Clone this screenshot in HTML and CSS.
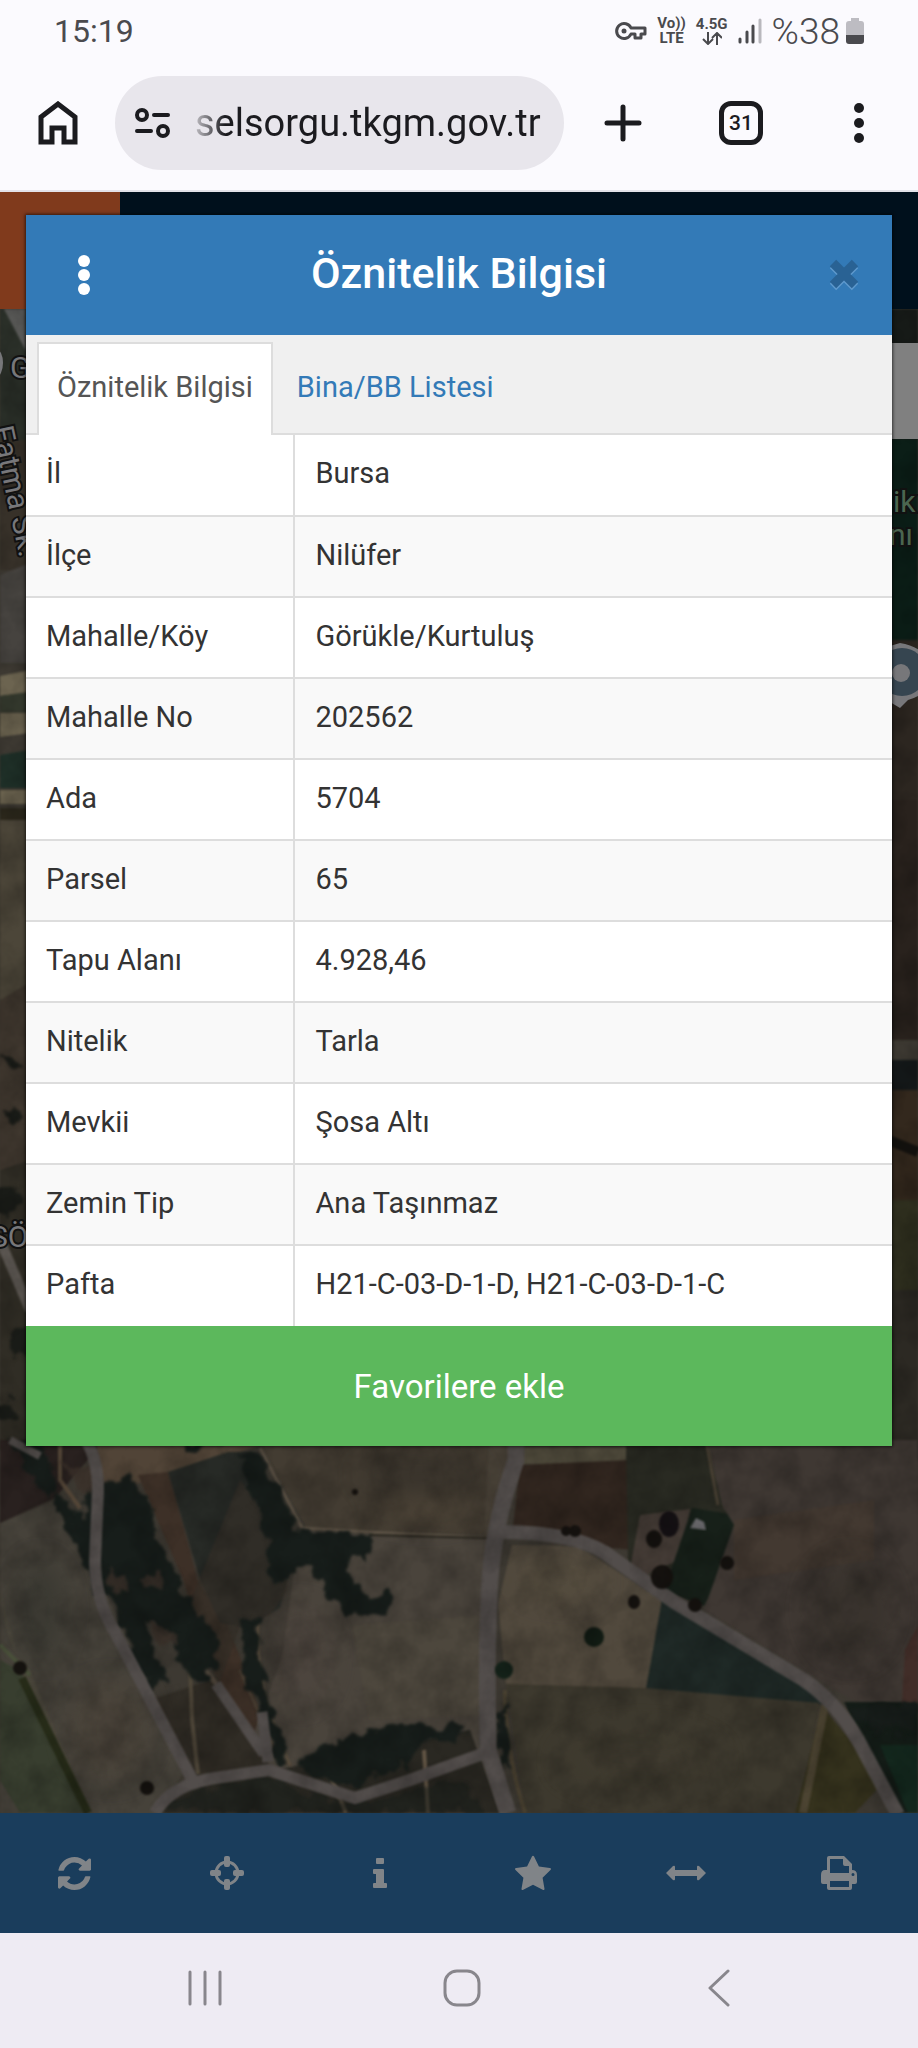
FILE: index.html
```html
<!DOCTYPE html>
<html lang="tr">
  <head>
    <meta charset="UTF-8" />
    <meta name="viewport" content="width=device-width, initial-scale=1.0" />
    <title>Parsel Sorgu</title>
    <link rel="stylesheet" href="styles.css">
  </head>
  <body>
    <div class="status-bar">
      <span class="clock">15:19</span>
      <div class="status-icons">
        <svg class="key-icon" width="32" height="20" viewBox="0 0 32 20" fill="none" stroke="#4a4a4e" stroke-width="3">
          <path d="M16 7a7.500 7.500 0 1 0 0 6h4v4h6v-4h4V7z" stroke-linejoin="round" />
          <circle cx="9" cy="10" r="2.500" fill="#4a4a4e" stroke="none" />
        </svg>
        <span class="network">Vo))<br>LTE</span>
        <span class="network">4.5G
          <svg width="20" height="13" viewBox="0 0 20 13" fill="none" stroke="#4a4a4e" stroke-width="2">
            <path d="M6 0v11M1 7l5 5 5-5M15 13V2M10 6l5-5 5 5" />
          </svg>
        </span>
        <svg width="24" height="26" viewBox="0 0 24 26" stroke-width="3" stroke-linecap="round" stroke="#4a4a4e">
          <path d="M2 21v3M9 14v10M15 8v16" />
          <path d="M22 2v22" stroke="#b9b8bd" />
        </svg>
        <span class="battery-text">%38</span>
        <svg width="18" height="26" viewBox="0 0 18 26">
          <path d="M5 0h8v3h2q3 0 3 3v12H0V6q0-3 3-3h2z" fill="#bdbcc2" />
          <path d="M0 17h18v6q0 3-3 3H3q-3 0-3-3z" fill="#4a4a4e" />
        </svg>
      </div>
    </div>

    <header class="browser-bar">
      <button class="bar-button home" aria-label="Ana sayfa">
        <svg width="40" height="44" viewBox="0 0 40 44" fill="none" stroke="#1b1b1f" stroke-width="5">
          <path d="M3 41V16L20 3l17 13v25H26V27H14v14z" />
        </svg>
      </button>
      <div class="address">
        <svg width="36" height="32" viewBox="0 0 36 32" fill="none" stroke="#1b1b1f" stroke-width="4" stroke-linecap="round">
          <circle cx="7" cy="8" r="5" />
          <path d="M19 8h14M2 24h14" />
          <circle cx="28" cy="24" r="5" />
        </svg>
        <input class="url" type="text" value="selsorgu.tkgm.gov.tr" aria-label="Adres">
      </div>
      <button class="bar-button" aria-label="Yeni sekme">
        <svg width="38" height="38" viewBox="0 0 38 38" stroke="#1b1b1f" stroke-width="5" stroke-linecap="round">
          <path d="M19 3v32M3 19h32" />
        </svg>
      </button>
      <button class="bar-button" aria-label="Sekmeler"><span class="tab-count">31</span></button>
      <button class="bar-button" aria-label="Menü">
        <svg width="10" height="40" viewBox="0 0 10 40" fill="#1b1b1f">
          <circle cx="5" cy="5" r="5" />
          <circle cx="5" cy="20" r="5" />
          <circle cx="5" cy="35" r="5" />
        </svg>
      </button>
    </header>

    <main class="page">
      <div class="backdrop">
        <div class="site-header"><div class="site-logo"></div></div>
        <svg class="map" viewBox="0 309 918 1504" preserveAspectRatio="xMidYMin slice">
          <defs>
            <filter id="rough" x="-5%" y="-5%" width="110%" height="110%" color-interpolation-filters="sRGB">
              <feTurbulence type="fractalNoise" baseFrequency="0.06" numOctaves="3" seed="4" />
              <feDisplacementMap in="SourceGraphic" scale="22" xChannelSelector="R" yChannelSelector="G" />
              <feGaussianBlur stdDeviation="1.500" />
            </filter>
            <filter id="soft" x="-5%" y="-5%" width="110%" height="110%" color-interpolation-filters="sRGB">
              <feGaussianBlur stdDeviation="1" />
            </filter>
            <filter id="haze" x="-20%" y="-20%" width="140%" height="140%" color-interpolation-filters="sRGB">
              <feGaussianBlur stdDeviation="12" />
            </filter>
            <filter id="grain">
              <feTurbulence type="fractalNoise" baseFrequency="0.03" numOctaves="4" seed="9" />
              <feColorMatrix values="0 0 0 0 0  0 0 0 0 0  0 0 0 0 0  1.200 0 0 0 -0.400" />
            </filter>
          </defs>
          <rect y="309" width="918" height="1504" fill="#3d3932" />

          <!-- left edge -->
          <g filter="url(#soft)">
            <path d="M0 309h30v150H0z" fill="#2b3029" />
            <path d="M4 309l22 42v-42z" fill="#5a5a58" />
            <path d="M0 440h30v130H0z" fill="#373129" />
            <path d="M0 575l30-12v100H0z" fill="#46433f" />
            <path d="M0 676l30-6v22l-30 4zM0 713h30v20l-30 4zM0 790h30v14H0z" fill="#6c6450" />
            <path d="M0 755l30-5v38H0z" fill="#1f3028" />
            <path d="M0 696l30-4v20H0z" fill="#353a2e" />
            <path d="M0 808h30v12H0z" fill="#2c281c" />
            <path d="M0 820h30v190H0z" fill="#4c4639" />
            <path d="M0 1000l30-18v190H0z" fill="#40382f" />
            <path d="M0 1170l30-10v290H0z" fill="#302d25" />
            <path d="M0 1240l30 70" stroke="#5a5550" stroke-width="10" />
          </g>
          <g filter="url(#rough)" fill="#191b17">
            <circle cx="14" cy="1064" r="8" /><circle cx="14" cy="1116" r="9" /><circle cx="6" cy="1200" r="14" />
            <circle cx="20" cy="1340" r="14" /><circle cx="6" cy="1410" r="12" />
          </g>

          <!-- right edge -->
          <g filter="url(#soft)">
            <path d="M888 309h30v500h-30z" fill="#171b18" />
            <path d="M888 439h30v208h-30z" fill="#0b1e17" />
            <path d="M888 640h30v170h-30z" fill="#2c2620" />
            <path d="M888 800h30v240h-30z" fill="#29221d" />
            <path d="M888 1060h30v30h-30z" fill="#15191a" />
            <path d="M888 1090h30v110h-30z" fill="#33281d" />
            <path d="M888 1140l30 12" stroke="#14120f" stroke-width="10" />
            <path d="M888 1200h30v90h-30z" fill="#30301f" />
            <path d="M888 1290h30v170h-30z" fill="#2c2923" />
          </g>

          <!-- fields -->
          <g filter="url(#soft)">
            <path d="M0 1440h60l45 0-50 58-55 25z" fill="#29211f" />
            <path d="M0 1523l55-22 42 75 20 40 70 150-30 50H0z" fill="#46423a" />
            <path d="M0 1590q5 60 30 80l60 143H60z" fill="#4b473c" />
            <path d="M0 1660l20 10 65 143H20L0 1780z" fill="#383e2f" />
            <path d="M95 1440h180l-95 32-75 20z" fill="#514437" />
            <path d="M138 1475l30-3q20 70 30 110l28 40 20 50 20 60-10 20-52-100-20-70z" fill="#3d3027" />
            <path d="M168 1472l60-20 30 0 14 68 18 50-10 38-34 20-26-5-20-44z" fill="#272a26" />
            <path d="M240 1480l40 50 8 60-18 25-30 12-22 60-30-80z" fill="#352f28" opacity=".7" />
            <path d="M258 1440h230v95l-180-5-40-70z" fill="#433c32" />
            <path d="M300 1530l190 8-10 190-8 150-180 30-40-170 30-80z" fill="#4a443c" />
            <path d="M352 1625l137-10v100l-120 5z" fill="#4d473d" />
            <path d="M150 1700l66-22 54 88-76 12z" fill="#302c25" />
            <path d="M180 1790l290-60 30 83H160z" fill="#2a2822" />
            <path d="M489 1440h35l-30 97h-10z" fill="#484137" />
            <path d="M524 1447h102v16l-105 1z" fill="#504b3c" />
            <path d="M520 1465l110-5 5 90-60-5-62-18z" fill="#31261f" />
            <path d="M626 1445h80l18 65 18 2-14 92-45-26-55-15z" fill="#292a22" />
            <path d="M640 1515l50-6-8 50-38 16-14-6z" fill="#463d37" />
            <path d="M692 1508l50 8-12 40-26 50-40-15z" fill="#172019" />
            <path d="M708 1440h210v265H860L704 1610l30-85-12-20z" fill="#3f3833" />
            <path d="M734 1520l140-20v60l-140 20z" fill="#433931" />
            <path d="M512 1545l66 1 84 54-16 90-140-6-8-80z" fill="#51493d" />
            <path d="M662 1600l16 0 150 100-8 5-174-16z" fill="#1f2926" />
            <path d="M506 1684l140 4 174 15-20 110H525z" fill="#3d392e" />
            <path d="M823 1708l-28 105 60 0 30-32z" fill="#35321d" />
            <path d="M844 1702h74v111h-20z" fill="#141c17" />
            <path d="M880 1745h38v68h-10z" fill="#13271d" />
            <path d="M905 1650l13-25v78h-16z" fill="#412d28" />
          </g>
          <g filter="url(#haze)" opacity=".5">
            <ellipse cx="40" cy="1610" rx="24" ry="50" fill="#2f302a" />
            <ellipse cx="110" cy="1730" rx="40" ry="50" fill="#4e453a" />
            <ellipse cx="420" cy="1475" rx="60" ry="18" fill="#2e2a24" />
            <ellipse cx="425" cy="1510" rx="50" ry="12" fill="#54493a" />
            <ellipse cx="560" cy="1580" rx="40" ry="20" fill="#574f3f" />
            <ellipse cx="300" cy="1655" rx="30" ry="50" fill="#504741" />
            <ellipse cx="850" cy="1610" rx="40" ry="50" fill="#332e28" />
            <ellipse cx="640" cy="1760" rx="80" ry="30" fill="#413c30" />
          </g>

          <!-- field edges and small paths -->
          <g fill="none" filter="url(#soft)">
            <path d="M260 1448l42 80 66 4 125 6" stroke="#5d5346" stroke-width="3" />
            <path d="M370 1535l120 3" stroke="#26241d" stroke-width="2" />
            <path d="M190 1660l2 60 6 54" stroke="#50483a" stroke-width="4" />
            <path d="M150 1612l35 35 34 40" stroke="#554b40" stroke-width="5" />
            <path d="M240 1670l40 90 12 5" stroke="#4b4034" stroke-width="3" />
            <path d="M258 1620q-4 70 32 145" stroke="#574c3d" stroke-width="3" />
            <path d="M0 1645l30 30" stroke="#48503a" stroke-width="4" />
            <path d="M60 1440v40l20 28" stroke="#57493a" stroke-width="4" />
            <path d="M332 1780l14 33M424 1750l4 63" stroke="#625545" stroke-width="4" />
            <path d="M825 1705l-22 108" stroke="#4c4432" stroke-width="8" />
            <path d="M505 1690q0 60 20 123" stroke="#4d4433" stroke-width="4" />
            <path d="M706 1440l12 65" stroke="#4a4134" stroke-width="3" />
          </g>

          <!-- trees -->
          <g filter="url(#rough)" fill="#171d1a">
            <path d="M8 1440h30l24 55-14 4zM60 1496l34 30-2 60-14-30-20-46z" />
            <path d="M110 1485l20-8 15 15 20 60 30 60 20 20 4 40-22 10-20-22-20-38-30 0-36-42-8-90z" />
            <path d="M114 1610l30 10 24 60-14 14-14-24z" />
            <path d="M240 1455l22 2 38 75 62 0 10 14-4 16-20-2-2 10 24 26 18-4 6 12-12 12-40-2-30-46-20 0-18 22-10-50z" />
            <path d="M242 1620l18-4-4 40 16 50 20 58-12 2-36-90z" />
            <path d="M298 1765l30-24 32-6 44-12 24 0 40 8-14 10-30 4-20 20-50 20-14 0z" />
            <path d="M170 1800l70-20 30-4 60 26 60-4 70-20 30 35H175z" opacity=".5" />
            <path d="M502 1700l8 40 2 30-10-6-6-50z" />
            <path d="M844 1704h70v30l-42-4z" />
            <path d="M240 1440l-14 6-40 6 4-12z" />
          </g>
          <!-- clearings between the trees -->
          <g filter="url(#rough)" fill="#3a3029" opacity=".8">
            <path d="M108 1570l14 4 6 22-16-4z" />
            <path d="M142 1572l16 0 2 14-14 4z" />
            <path d="M150 1620l20 12 4 12-18-4z" />
            <path d="M60 1462l30 10 2 24-16-8z" />
          </g>

          <!-- roads -->
          <g fill="none" stroke="#524d4b" filter="url(#soft)">
            <path d="M10 1440l30 16" stroke-width="8" />
            <path d="M86 1440q12 20 12 50l-3 70q0 40 20 72l44 84 34 65" stroke-width="12" />
            <path d="M155 1813q14-26 54-34l60-9 24 8 62 20 55-18 78-28" stroke-width="12" />
            <path d="M216 1684l48 70M262 1712l6 50" stroke-width="11" />
            <path d="M516 1440v20q-22 62-26 120t-2 170l20 63" stroke-width="17" />
            <path d="M500 1532q70 0 104 20l70 50 130 78q34 24 54 60l40 75" stroke-width="14" />
          </g>

          <g filter="url(#soft)" fill="#15120f">
            <circle cx="20" cy="1668" r="7" /><circle cx="147" cy="1788" r="7" /><circle cx="355" cy="1492" r="3" />
            <ellipse cx="669" cy="1524" rx="10" ry="13" fill="#151114" /><ellipse cx="654" cy="1539" rx="8" ry="9" />
            <ellipse cx="662" cy="1577" rx="11" ry="12" /><ellipse cx="634" cy="1602" rx="6" ry="7" />
            <circle cx="727" cy="1563" r="7" /><circle cx="695" cy="1605" r="7" />
            <circle cx="594" cy="1637" r="10" fill="#121c14" /><circle cx="504" cy="1670" r="9" fill="#15231a" />
            <circle cx="566" cy="1531" r="5" /><circle cx="575" cy="1531" r="6" />
            <path d="M22 1678l66 135" stroke="#262b18" stroke-width="8" />
          </g>
          <path d="M690 1528l6-10 8 4 2 8z" fill="#68676a" filter="url(#soft)" />
          <rect y="309" width="918" height="1504" filter="url(#grain)" opacity=".35" />

          <!-- place labels -->
          <g class="map-labels">
            <text x="10" y="378">G</text>
            <text x="-10" y="1247">SÖ</text>
            <text transform="translate(-8 428) rotate(78)">Fatma Sk.</text>
          </g>
          <g class="map-labels park">
            <text x="893" y="512">ik</text>
            <text x="889" y="545">nı</text>
          </g>
          <path d="M900 643q30 5 32 31-2 20-24 26l-8 8-10-6v-56z" fill="#77777a" />
          <circle cx="902" cy="672" r="24" fill="#364550" />
          <circle cx="901" cy="673" r="9" fill="#77777a" />
          <ellipse cx="-4" cy="363" rx="7" ry="14" fill="#77777a" />
          <path d="M888 343h30v96h-30z" fill="#808080" />
        </svg>
      </div>

      <section class="modal" role="dialog" aria-labelledby="modal-title">
        <div class="modal-header">
          <button class="header-button" aria-label="Seçenekler">
            <svg width="12" height="42" viewBox="0 0 12 42" fill="#fff">
              <circle cx="6" cy="7" r="6" />
              <circle cx="6" cy="21" r="6" />
              <circle cx="6" cy="35" r="6" />
            </svg>
          </button>
          <h1 id="modal-title">Öznitelik Bilgisi</h1>
          <button class="header-button" aria-label="Kapat">
            <svg width="30" height="32" viewBox="0 0 30 32" fill="none" stroke-width="9" stroke-linecap="butt">
              <path d="M4 6l22 22M26 6L4 28" stroke="#5e99cd" />
              <path d="M4 4l22 22M26 4L4 26" stroke="#296294" />
            </svg>
          </button>
        </div>

        <nav class="tabs">
          <a class="tab active" href="#oznitelik">Öznitelik Bilgisi</a>
          <a class="tab" href="#bina">Bina/BB Listesi</a>
        </nav>

        <table class="info-table" id="oznitelik">
          <tbody>
            <tr><th scope="row">İl</th><td>Bursa</td></tr>
            <tr><th scope="row">İlçe</th><td>Nilüfer</td></tr>
            <tr><th scope="row">Mahalle/Köy</th><td>Görükle/Kurtuluş</td></tr>
            <tr><th scope="row">Mahalle No</th><td>202562</td></tr>
            <tr><th scope="row">Ada</th><td>5704</td></tr>
            <tr><th scope="row">Parsel</th><td>65</td></tr>
            <tr><th scope="row">Tapu Alanı</th><td>4.928,46</td></tr>
            <tr><th scope="row">Nitelik</th><td>Tarla</td></tr>
            <tr><th scope="row">Mevkii</th><td>Şosa Altı</td></tr>
            <tr><th scope="row">Zemin Tip</th><td>Ana Taşınmaz</td></tr>
            <tr><th scope="row">Pafta</th><td>H21-C-03-D-1-D, H21-C-03-D-1-C</td></tr>
          </tbody>
        </table>

        <button class="favorite">Favorilere ekle</button>
      </section>
    </main>

    <div class="toolbar">
      <button aria-label="Yenile">
        <svg width="33" height="33" viewBox="0 0 1536 1536">
          <path d="M1511 928q0 5-1 7-64 268-268 434.500t-478 166.500q-146 0-282.500-55t-243.500-157l-129 129q-19 19-45 19t-45-19-19-45v-448q0-26 19-45t45-19h448q26 0 45 19t19 45-19 45l-137 137q71 66 161 102t187 36q134 0 250-65t186-179q11-17 53-117 8-23 30-23h192q13 0 22.500 9.500t9.500 22.500zm25-800v448q0 26-19 45t-45 19h-448q-26 0-45-19t-19-45 19-45l138-138q-148-137-349-137-134 0-250 65t-186 179q-11 17-53 117-8 23-30 23h-199q-13 0-22.500-9.500t-9.500-22.500v-7q65-268 270-434.500t480-166.500q146 0 284 55.500t245 156.500l130-129q19-19 45-19t45 19 19 45z" />
        </svg>
      </button>
      <button aria-label="Konumum">
        <svg width="34" height="34" viewBox="0 0 34 34">
          <circle cx="17" cy="17" r="11" fill="none" stroke="#808488" stroke-width="3" />
          <rect x="14" y="0" width="6" height="11" rx="2" />
          <rect x="14" y="23" width="6" height="11" rx="2" />
          <rect x="0" y="14" width="11" height="6" rx="2" />
          <rect x="23" y="14" width="11" height="6" rx="2" />
        </svg>
      </button>
      <button aria-label="Bilgi">
        <svg width="14" height="32" viewBox="0 0 14 32">
          <path d="M4 1h6q1 0 1 1v4q0 1-1 1H4q-1 0-1-1V2q0-1 1-1zM1 12h9q1 0 1 1v13h2q1 0 1 1v3q0 1-1 1H1q-1 0-1-1v-3q0-1 1-1h2v-9H1q-1 0-1-1v-3q0-1 1-1z" />
        </svg>
      </button>
      <button aria-label="Favoriler">
        <svg width="36" height="36" viewBox="0 0 1664 1664">
          <path d="M1664 647q0 22-26 48l-363 354 86 500q1 7 1 20 0 21-10.500 35.500t-30.500 14.500q-19 0-40-12l-449-236-449 236q-22 12-40 12-21 0-31.500-14.500t-10.500-35.500q0-6 2-20l86-500-364-354q-25-27-25-48 0-37 56-46l502-73 225-455q19-41 49-41t49 41l225 455 502 73q56 9 56 46z" />
        </svg>
      </button>
      <button aria-label="Ölçüm">
        <svg width="40" height="16" viewBox="0 0 40 16">
          <path d="M0 8l7-7q2-1 2 1v3h22V2q0-2 2-1l7 7-7 7q-2 1-2-1v-3H9v3q0 2-2 1z" />
        </svg>
      </button>
      <button aria-label="Yazdır">
        <svg width="36" height="34" viewBox="0 0 36 34">
          <path d="M6 2q0-2 2-2h15l8 8v6q5 0 5 5v7q0 2-2 2h-3v4q0 2-2 2H8q-2 0-2-2v-4H2q-2 0-2-2v-7q0-5 4-5h2zM9 3v14h19V10h-4q-2 0-2-2V3zM9 25v6h19v-6zM32 17a1 1 0 1 0 0 3 1 1 0 0 0 0-3z" fill-rule="evenodd" />
        </svg>
      </button>
    </div>

    <div class="nav-bar">
      <button aria-label="Son uygulamalar">
        <svg width="36" height="38" viewBox="0 0 36 38">
          <path d="M3 3v32M18 3v32M33 3v32" />
        </svg>
      </button>
      <button aria-label="Ana ekran">
        <svg width="38" height="38" viewBox="0 0 38 38">
          <rect x="2" y="2" width="34" height="34" rx="12" />
        </svg>
      </button>
      <button aria-label="Geri">
        <svg width="22" height="38" viewBox="0 0 22 38">
          <path d="M20 2L2 19l18 17" />
        </svg>
      </button>
    </div>
  </body>
</html>
```
FILE: styles.css
```css
* {
  box-sizing: border-box;
}

body {
  display: flex;
  flex-direction: column;
  min-height: 100vh;
  margin: 0;
  font-family: Roboto, "Noto Sans", sans-serif;
  font-size: 29px;
  color: #333;
  background-color: #fbfafe;
}

button {
  display: flex;
  align-items: center;
  justify-content: center;
  padding: 0;
  border: none;
  background: none;
  font-family: inherit;
  cursor: pointer;
}

svg {
  display: block;
}

/* phone status bar */
.status-bar {
  display: flex;
  align-items: center;
  justify-content: space-between;
  height: 62px;
  padding: 0 54px;
  color: #4a4a4e;
}

.clock {
  font-size: 32px;
}

.status-icons {
  display: flex;
  align-items: center;
  gap: 10px;
}

.network {
  font-size: 15px;
  font-weight: 700;
  line-height: 15px;
  text-align: center;
}

.network svg {
  margin: 0 auto;
}

.battery-text {
  margin-right: -4px;
  font-size: 37px;
  font-weight: 300;
}

/* browser toolbar */
.browser-bar {
  display: flex;
  align-items: center;
  height: 130px;
  padding-bottom: 6px;
  border-bottom: 2px solid #e3e2e8;
}

.bar-button {
  flex: none;
  width: 118px;
  height: 96px;
}

.bar-button.home {
  width: 115px;
}

.address {
  display: flex;
  flex: 1;
  align-items: center;
  gap: 24px;
  min-width: 0;
  height: 94px;
  padding: 0 16px 0 20px;
  border-radius: 47px;
  background-color: #e8e6ec;
}

.address svg {
  flex: none;
}

.url {
  flex: 1;
  min-width: 0;
  padding: 0;
  border: none;
  outline: none;
  background: none;
  font-family: inherit;
  font-size: 38px;
  color: #1b1b1f;
  -webkit-mask-image: linear-gradient(to right, rgba(0, 0, 0, 0.2), #000 30px);
  mask-image: linear-gradient(to right, rgba(0, 0, 0, 0.2), #000 30px);
}

.tab-count {
  width: 44px;
  height: 44px;
  border: 5px solid #1b1b1f;
  border-radius: 12px;
  font-size: 21px;
  font-weight: 500;
  line-height: 34px;
  text-align: center;
  color: #1b1b1f;
}

/* map behind the dialog */
.page {
  position: relative;
  flex: 1;
  padding: 23px 26px;
}

.backdrop {
  position: absolute;
  inset: 0;
  display: flex;
  flex-direction: column;
  overflow: hidden;
}

.site-header {
  height: 117px;
  background-color: #00101c;
}

.site-logo {
  width: 120px;
  height: 100%;
  background-color: #803a1c;
}

.map {
  flex: 1;
  width: 100%;
  min-height: 0;
}

.map-labels {
  font-size: 30px;
  fill: #77777a;
  stroke: #111;
  stroke-width: 4px;
  paint-order: stroke;
}

.map-labels.park {
  fill: #4b6650;
}

/* dialog */
.modal {
  position: relative;
  background-color: #fff;
  box-shadow: 0 0 3px 1px rgba(0, 0, 0, 0.6);
}

.modal-header {
  display: flex;
  align-items: center;
  justify-content: space-between;
  height: 120px;
  background-color: #337ab7;
}

.modal-header h1 {
  margin: 0;
  padding-bottom: 4px;
  font-size: 43px;
  font-weight: 500;
  color: #fff;
}

.header-button {
  width: 96px;
  height: 96px;
}

.header-button:first-child {
  padding-left: 20px;
}

.tabs {
  display: flex;
  gap: 4px;
  height: 100px;
  padding: 7px 11px 0;
  border-bottom: 2px solid #ddd;
  background-color: #f0f0f0;
}

.tab {
  height: 93px;
  padding: 0 18px;
  border: 2px solid transparent;
  border-bottom: none;
  line-height: 86px;
  color: #337ab7;
  text-decoration: none;
}

.tab.active {
  border-color: #ddd;
  background-color: #fff;
  color: #555;
}

.info-table {
  width: 100%;
  border-collapse: collapse;
}

.info-table th,
.info-table td {
  height: 81px;
  padding: 0 20px 4px;
  border-bottom: 2px solid #ddd;
  font-weight: 400;
  text-align: left;
}

.info-table th {
  width: 31%;
  border-right: 2px solid #ddd;
}

.info-table tr:nth-child(even) {
  background-color: #f9f9f9;
}

.info-table tr:last-child th,
.info-table tr:last-child td {
  border-bottom: none;
}

.favorite {
  width: 100%;
  height: 120px;
  background-color: #5cb85c;
  font-size: 33px;
  color: #fff;
}

/* map tools */
.toolbar {
  display: grid;
  grid-template-columns: repeat(6, 1fr);
  height: 120px;
  background-color: #1a3d5c;
}

.toolbar button {
  padding-right: 5px;
}

.toolbar svg {
  fill: #808488;
}

/* phone navigation */
.nav-bar {
  display: grid;
  grid-template-columns: repeat(3, 1fr);
  height: 115px;
  padding: 0 70px 6px 76px;
  background-color: #eeebf3;
}

.nav-bar svg {
  fill: none;
  stroke: #88868c;
  stroke-width: 3px;
  stroke-linecap: round;
  stroke-linejoin: round;
}
```
